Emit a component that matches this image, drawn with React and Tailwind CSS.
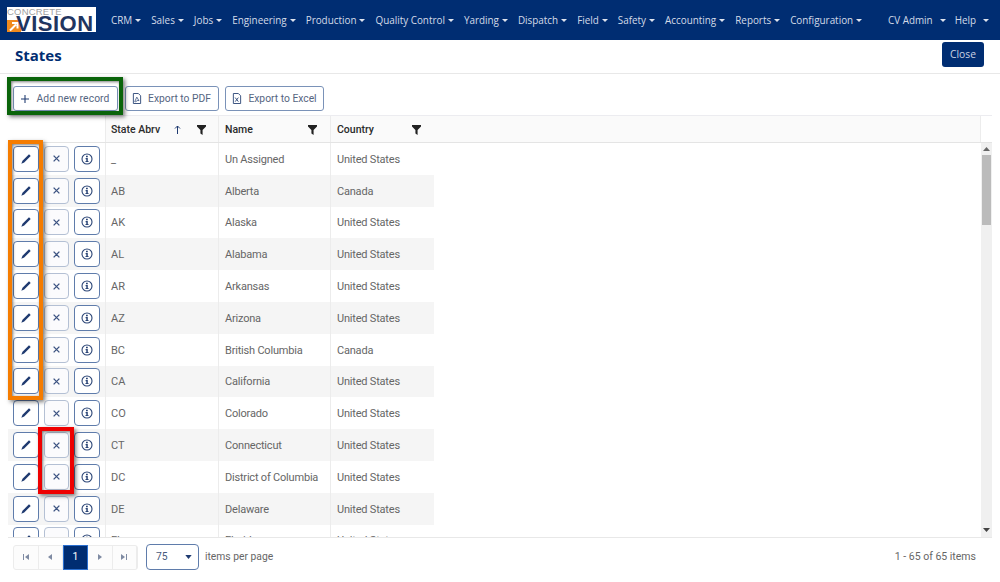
import React from 'react';

const navItems = ['CRM', 'Sales', 'Jobs', 'Engineering', 'Production', 'Quality Control', 'Yarding', 'Dispatch', 'Field', 'Safety', 'Accounting', 'Reports', 'Configuration'];

const rows = [
  ['_', 'Un Assigned', 'United States'],
  ['AB', 'Alberta', 'Canada'],
  ['AK', 'Alaska', 'United States'],
  ['AL', 'Alabama', 'United States'],
  ['AR', 'Arkansas', 'United States'],
  ['AZ', 'Arizona', 'United States'],
  ['BC', 'British Columbia', 'Canada'],
  ['CA', 'California', 'United States'],
  ['CO', 'Colorado', 'United States'],
  ['CT', 'Connecticut', 'United States'],
  ['DC', 'District of Columbia', 'United States'],
  ['DE', 'Delaware', 'United States'],
  ['FL', 'Florida', 'United States'],
];

const Caret = () => (
  <span className="ml-[3px] inline-block w-0 h-0 border-x-[3px] border-x-transparent border-t-[3px] border-t-[#dfe4ee] align-[2px]" />
);

const Filter = () => (
  <svg width="9" height="10" viewBox="0 0 10 11">
    <path d="M0 0h10v1.500L6.200 5.500V11L3.800 9.500v-4L0 1.500z" fill="#222" />
  </svg>
);

const Pencil = () => (
  <svg width="12" height="12" viewBox="0 0 12 12">
    <path d="M9 1.300l1.700 1.700-6.500 6.500-2.900 1.200 1.200-2.900z" fill="#1f3a70" />
  </svg>
);

const Cross = () => (
  <svg width="9" height="9" viewBox="0 0 10 10">
    <path d="M1.800 1.800l6.400 6.400M8.200 1.800L1.800 8.200" stroke="#3d5482" strokeWidth="1.500" />
  </svg>
);

const Info = () => (
  <svg width="12" height="12" viewBox="0 0 12 12">
    <circle cx="6" cy="6" r="5" fill="none" stroke="#2b4576" strokeWidth="1.100" />
    <path d="M5 2.800h1.800v1.400H5zM4.600 5.100h2.200v2.800h.7v1.100H4.500V7.900h.8V6.200h-.7z" fill="#2b4576" />
  </svg>
);

const DocIcon = ({ x }) => (
  <svg width="10" height="11" viewBox="0 0 11 12">
    <path d="M1.500.5h5.500l2.500 2.500v8.500h-8z" fill="none" stroke="#2b4576" />
    {x ? (
      <path d="M3.500 5l3.500 4.500M7 5L3.500 9.500" stroke="#2b4576" />
    ) : (
      <path d="M5.300 4.500L3 9.500h1l2.500-1.500 1.200.5z" fill="none" stroke="#2b4576" strokeWidth=".8" />
    )}
  </svg>
);

const ToolButton = ({ children, className }) => (
  <button className={`h-[25px] flex items-center justify-center gap-[6px] rounded-[3px] border border-[#7a92b8] bg-white text-[10.300px] text-[#55657f] ${className}`}>
    {children}
  </button>
);

const RowButton = ({ children, faded }) => (
  <button className={`w-[25.500px] h-[26px] flex items-center justify-center rounded-[4px] border ${faded ? 'border-[#b4c0d4] bg-[#fbfbfd]' : 'border-[#5f7cab] bg-white'}`}>
    {children}
  </button>
);

const PageArrow = ({ d }) => (
  <button className="w-[24.500px] h-full flex items-center justify-center border-r border-[#ececec]">
    <svg width="8" height="8" viewBox="0 0 8 8">
      <path d={d} fill="#7f8ba3" />
    </svg>
  </button>
);

const App = () => {
  return (
    <div className="relative w-[1000px] h-[582px] overflow-hidden bg-white flex flex-col font-['Roboto',sans-serif] text-[10.300px] text-[#666]">
      {/* top nav */}
      <nav className="h-10 shrink-0 bg-[#002d72] flex items-center pl-[7px] text-[#d4dbe8] font-['Open_Sans',sans-serif] text-[9.900px]">
        <div className="w-[89px] h-[25px] bg-white mb-[1px] relative overflow-hidden shrink-0">
          <div className="absolute left-0 top-0 text-[9.500px] leading-[9px] tracking-[0.200px] text-[#a0a0a0] font-['Liberation_Sans',sans-serif]">CONCRETE</div>
          <div className="absolute left-0 bottom-0 w-[14px] h-[12px] bg-[#f08a1d]">
            <svg width="14" height="12" viewBox="0 0 14 12">
              <path d="M3 10.500l6-6M5 3h5.500v5.500" stroke="#fff" strokeWidth="2" fill="none" />
            </svg>
          </div>
          <div className="absolute left-[9px] top-[9px] text-[22px] leading-[16px] font-bold text-[#1f3560] font-['Liberation_Sans',sans-serif] tracking-[0.500px]">VISION</div>
        </div>
        <div className="ml-[15px] flex items-center gap-[10px]">
          {navItems.map((item) => (
            <span key={item} className="whitespace-nowrap">{item}<Caret /></span>
          ))}
        </div>
        <div className="ml-auto mr-[11px] flex items-center gap-[9px]">
          <span className="whitespace-nowrap">CV Admin<span className="ml-[4px]"><Caret /></span></span>
          <span className="whitespace-nowrap">Help<span className="ml-[4px]"><Caret /></span></span>
        </div>
      </nav>

      {/* page title */}
      <div className="h-[34px] shrink-0 flex items-center justify-between pl-[15px] pr-[16px] border-b border-[#e8e8e8]">
        <h1 className="text-[15px] font-bold text-[#002d72] font-['Open_Sans',sans-serif] -mt-[2px]">States</h1>
        <button className="w-[42px] h-[25px] -mt-[4px] bg-[#002d72] rounded-[3px] text-[10.300px] text-[#c9d2e2] font-['Open_Sans',sans-serif]">Close</button>
      </div>

      {/* toolbar */}
      <div className="h-[41px] shrink-0 flex items-center gap-[6.500px] pl-[13px] pt-[8px]">
        <ToolButton className="w-[105px]">
          <svg width="8" height="8" viewBox="0 0 9 9"><path d="M4.500 0v9M0 4.500h9" stroke="#1f3a70" strokeWidth="1.200" /></svg>
          <span className="ml-[1px] tracking-[0.100px]">Add new record</span>
        </ToolButton>
        <ToolButton className="w-[94px]"><DocIcon />Export to PDF</ToolButton>
        <ToolButton className="w-[99px]"><DocIcon x />Export to Excel</ToolButton>
      </div>

      {/* grid */}
      <div className="ml-2 w-[984px] flex-1 min-h-0 flex flex-col border-t border-[#ececf0]">
        <div className="h-[27px] shrink-0 flex border-b border-[#e4e4e4] text-[10.500px] font-medium text-[#2b2b2b]">
          <div className="w-[97px] bg-white" />
          <div className="flex-1 flex bg-[#fafafa] border-r border-[#ececec] mr-[11px]">
            <div className="w-[114px] flex items-center pl-[5px] pr-[12px] pt-[1px] border-x border-[#ececec]">
              <span>State Abrv</span>
              <svg className="ml-[14px]" width="7" height="9" viewBox="0 0 7 9"><path d="M3.500 9V1M1 3.500L3.500 1 6 3.500" stroke="#1f3a70" fill="none" /></svg>
              <span className="ml-auto"><Filter /></span>
            </div>
            <div className="w-[112px] flex items-center pl-[6px] pr-[13px] pt-[1px] border-r border-[#ececec]">
              <span>Name</span>
              <span className="ml-auto"><Filter /></span>
            </div>
            <div className="w-[103px] flex items-center pl-[6px] pr-[13px] pt-[1px]">
              <span>Country</span>
              <span className="ml-auto"><Filter /></span>
            </div>
          </div>
        </div>

        <div className="flex-1 min-h-0 flex border-b border-[#e8e8e8]">
          <div className="flex-1 overflow-hidden">
            {rows.map((row, i) => (
              <div key={row[0]} className={`h-[31.800px] w-[426px] flex ${i % 2 ? 'bg-[#f5f5f5]' : 'bg-white'}`}>
                <div className="w-[97px] shrink-0 flex items-center gap-[5px] pl-[5px]">
                  <RowButton><Pencil /></RowButton>
                  <RowButton faded><Cross /></RowButton>
                  <RowButton><Info /></RowButton>
                </div>
                <div className="w-[114px] shrink-0 flex items-center pl-[5px] pt-[2.500px] border-x border-[#ececec] text-[11px]">{row[0]}</div>
                <div className="w-[112px] shrink-0 flex items-center pl-[6px] pt-[2.500px] border-r border-[#ececec] text-[11px] tracking-[-0.200px]">{row[1]}</div>
                <div className="flex-1 flex items-center pl-[6px] pt-[2.500px] text-[11px] tracking-[-0.200px]">{row[2]}</div>
              </div>
            ))}
          </div>
          {/* scrollbar */}
          <div className="w-[11px] shrink-0 bg-[#f0f0f0] flex flex-col items-center">
            <svg className="mt-[4px]" width="7" height="4" viewBox="0 0 7 4"><path d="M3.500 0L7 4H0z" fill="#666" /></svg>
            <div className="w-[9px] h-[70px] mt-[4px] bg-[#bbbbbb]" />
            <svg className="mt-auto mb-[5px]" width="7" height="4" viewBox="0 0 7 4"><path d="M3.500 4L7 0H0z" fill="#444" /></svg>
          </div>
        </div>

        {/* pager */}
        <div className="h-[44px] shrink-0 flex items-center pl-[5px] pr-[16px] pb-[6px]">
          <div className="h-[25px] flex items-center border border-[#ececec] rounded-[3px] bg-[#fcfcfc]">
            <PageArrow d="M1 1h1v6H1zM7 1v6L3 4z" />
            <PageArrow d="M6 1v6L2 4z" />
            <span className="w-[25px] h-[25px] flex items-center justify-center bg-[#002d72] border border-[#2a6fd0] text-white">1</span>
            <PageArrow d="M2 1v6l4-3z" />
            <PageArrow d="M1 1v6l4-3zM6 1h1v6H6z" />
          </div>
          <div className="ml-[8px] w-[53px] h-[26px] flex items-center justify-between pl-[9px] pr-[6px] rounded-[4px] border border-[#5f7cab] text-[#47597c]">
            75
            <svg width="7" height="4" viewBox="0 0 8 5"><path d="M0 0h8L4 5z" fill="#1f3a70" /></svg>
          </div>
          <span className="ml-[6px]">items per page</span>
          <span className="ml-auto text-[10.500px]">1 - 65 of 65 items</span>
        </div>
      </div>

      {/* annotation boxes */}
      <div className="absolute left-[7px] top-[77px] w-[116px] h-[38px] border-[4px] border-[#0a640a] shadow-[2px_2px_4px_rgba(0,0,0,0.5),inset_1px_1px_3px_rgba(0,0,0,0.5)]" />
      <div className="absolute left-[8px] top-[140px] w-[35px] h-[260px] border-[4px] border-[#f57c00] shadow-[2px_2px_4px_rgba(0,0,0,0.5),inset_1px_1px_3px_rgba(0,0,0,0.5)]" />
      <div className="absolute left-[38px] top-[427px] w-[36px] h-[67px] border-[4px] border-[#ee0000] shadow-[2px_2px_4px_rgba(0,0,0,0.5),inset_1px_1px_3px_rgba(0,0,0,0.5)]" />
    </div>
  );
};

export default App;
